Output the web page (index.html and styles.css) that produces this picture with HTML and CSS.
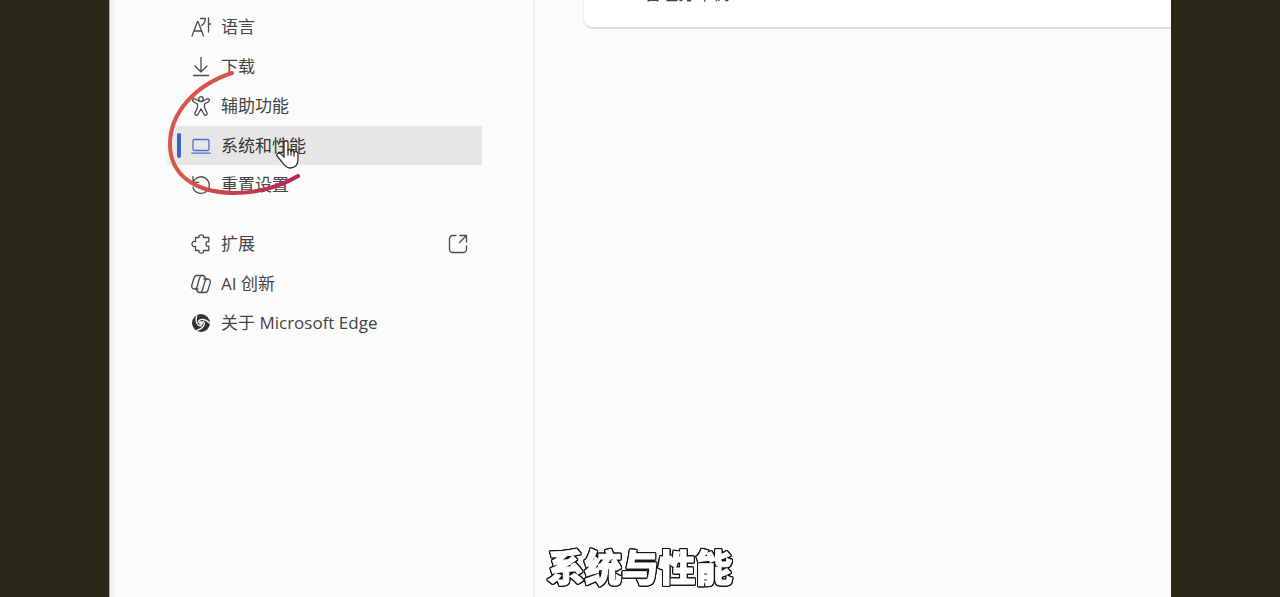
FILE: index.html
```html
<!DOCTYPE html>
<html lang="zh-CN">
<head>
<meta charset="utf-8">
<title>设置</title>
<link rel="stylesheet" href="styles.css">
</head>
<body>
<div class="stage">
  <div class="window">
    <nav class="sidebar" aria-label="设置">
      <ul class="menu">
        <li><a class="item" href="#"><svg class="icon" viewBox="0 0 20 20"><path d="M1 19 6.500 4.500h.5L12.500 19M3 14h7.500"/><path d="M9.500 1.500h4.800c0 3-1.300 5.500-3.800 7M17.500 1v14M17.500 7H20"/></svg>语言</a></li>
        <li><a class="item" href="#"><svg class="icon" viewBox="0 0 20 20"><path d="M10 0v15M4 9l6 6 6-6M2.500 18.500h15"/></svg>下载</a></li>
        <li><a class="item" href="#"><svg class="icon" viewBox="0 0 20 20"><circle cx="10" cy="3" r="2.300"/><path d="M7.700 5 4.300 3C2 2 .5 4.500 2.500 5.700l4 2.300v3.500L4 17c-.6 2.200 2.100 3.200 3 1.200L10 12.700l3 5.500c.9 2 3.600 1 3-1.200l-2.500-5.500V8l4-2.300C19.500 4.500 18 2 15.700 3L12.300 5c-1.400.7-3.200.7-4.600 0Z"/></svg>辅助功能</a></li>
        <li><a class="item selected" href="#" aria-current="page"><svg class="icon" viewBox="0 0 20 20"><rect x="2" y="3.500" width="16" height="11" rx="1.500"/><path d="M.8 17.200h18.400"/></svg>系统和性能</a></li>
        <li><a class="item" href="#"><svg class="icon" viewBox="0 0 20 20"><path d="M2 1.500v5.800h5.800M2.300 7A8.300 8.300 0 1 1 2 12.300"/></svg>重置设置</a></li>
      </ul>
      <ul class="menu">
        <li><a class="item" href="#"><svg class="icon" viewBox="0 0 20 20"><path d="M4.500 3.500H8C7.500 1.500 8.500.8 10.200.8s2.700.7 2.200 2.700h5.400v4.300c-2-.5-2.700.5-2.700 2.200s.7 2.700 2.700 2.200v4.300h-5.400c.5 2-.5 2.700-2.200 2.700S7.500 18.500 8 16.500H4.500v-4c-2 .5-3.500-.5-3.500-2.500s1.500-3 3.500-2.500Z"/></svg>扩展<svg class="icon external" viewBox="0 0 20 20"><path d="M8 1.500H5Q1.500 1.500 1.500 5v10q0 3.500 3.500 3.500h10q3.500 0 3.500-3.500v-3M12 1.500h6.500V8M18.500 1.500l-7 7"/></svg></a></li>
        <li><a class="item" href="#"><svg class="icon" viewBox="0 0 20 20"><path d="M7 15H3.500C.8 15 .3 13 1 10.500l2-6.500C3.600 2 4.500 1.500 6 1.500h6c1.500 0 2 1 2.500 3.500M13 5h3.500c2.700 0 3.200 2 2.500 4.500L17 16c-.6 2-1.500 2.500-3 2.500H8c-1.500 0-2-1-2.500-3.500M10.500 1.500C9 2 8.700 3.500 8.300 5L6 13c-.5 1.500-1 2-2.500 2M9.500 18.500c1.500-.5 1.800-2 2.200-3.500L14 7c.5-1.500 1-2 2.500-2"/></svg>AI 创新</a></li>
        <li><a class="item" href="#"><svg class="icon" viewBox="0 0 20 20"><circle class="solid" cx="10" cy="10" r="9"/><circle class="hole" cx="10" cy="10" r="2"/><g class="cut"><path d="M7.500 9C8 5.500 14 5 18.500 10"/><path d="M7.500 9C8 5.500 14 5 18.500 10" transform="rotate(120 10 10)"/><path d="M7.500 9C8 5.500 14 5 18.500 10" transform="rotate(240 10 10)"/></g></svg>关于 Microsoft Edge</a></li>
      </ul>
    </nav>
    <main class="content">
      <section class="card"><p class="card-text">管理打印机</p></section>
    </main>
  </div>
  <svg class="stroke-mark" viewBox="0 0 140 130" aria-hidden="true">
    <defs><linearGradient id="mark" x1="0" y1="0" x2="1" y2="1"><stop offset="0" stop-color="#d64f50"/><stop offset=".5" stop-color="#d75a4b"/><stop offset="1" stop-color="#b51f52"/></linearGradient></defs>
    <path d="M72 8C35 20 10 48 10 79c0 30 23 48 63 49 27 0 48-7 65-17" stroke="url(#mark)"/>
  </svg>
  <svg class="pointer" viewBox="0 0 24 30" aria-hidden="true"><path d="M8 18V4c0-3 4-3 4 0v8c0-2 3-2 3 0v1c0-2 3-2 3 0v1c0-2 4-2 4 1v5c0 5-2 9-8 9-4 0-6-3-8-6l-5-6c-1-2 2-4 4-2Z"/><path d="M12 11v5M15 12v4M18 13v4"/></svg>
  <p class="caption">系统与性能</p>
</div>
</body>
</html>
```
FILE: styles.css
```css
* { box-sizing: border-box; }
body {
  margin: 0;
  background: #292716;
  color: #444;
  font: 17px/24px "Open Sans", "Noto Sans CJK SC", sans-serif;
}
.stage {
  position: relative;
  min-height: 100vh;
  padding: 0 109px;
  overflow: hidden;
  display: flex;
}
.window {
  flex: 1;
  display: grid;
  grid-template-columns: 425px 1fr;
  background: #fbfbfb;
  border-left: 1px solid #aaa;
  box-shadow: inset 4px 0 #f4f2f1;
}
.sidebar {
  padding: 7px 51px 0 56px;
  border-right: 2px solid #f1f1f1;
  display: flex;
  flex-direction: column;
  gap: 19px;
}
.menu {
  display: grid;
  grid-auto-rows: 40px 39px;
  list-style: none;
  margin: 0;
  padding: 0;
}
.item {
  position: relative;
  display: flex;
  align-items: center;
  gap: 10px;
  height: 100%;
  padding: 0 14px 0 25px;
  color: inherit;
  text-decoration: none;
}
.selected {
  background: linear-gradient(90deg, #f5f5f5, #e6e6e6 12px);
  color: #333;
}
.selected::before {
  content: "";
  position: absolute;
  left: 11px;
  top: 7px;
  width: 4px;
  height: 25px;
  border-radius: 2px;
  background: #3b65c4;
}
.icon {
  flex: none;
  width: 20px;
  height: 20px;
  fill: none;
  stroke: #4a4a4a;
  stroke-width: 1.3;
  stroke-linecap: round;
  stroke-linejoin: round;
}
.selected .icon { stroke: #4c70c8; }
.external { margin-left: auto; }
.icon .solid { fill: #333; stroke: none; }
.icon .hole { fill: #fbfbfb; stroke: none; }
.icon .cut { stroke: #fbfbfb; }
.content { padding-left: 48px; }
.card {
  margin-top: -18px;
  padding: 0 0 21px 60px;
  background: #fff;
  border: solid #ddd;
  border-width: 0 0 2px 1px;
  border-left-color: #eee;
  border-radius: 0 0 0 10px;
}
.card-text { margin: 0; }
.stroke-mark {
  position: absolute;
  left: 160px;
  top: 65px;
  width: 140px;
  height: 130px;
  overflow: visible;
  fill: none;
  stroke-width: 4;
  stroke-linecap: round;
}
.pointer {
  position: absolute;
  left: 276px;
  top: 139px;
  width: 24px;
  height: 30px;
  fill: #fff;
  stroke: #333;
  stroke-width: 1.3;
  stroke-linecap: round;
}
.caption {
  position: absolute;
  left: 0;
  right: 0;
  bottom: 3px;
  margin: 0;
  text-align: center;
  font: 900 37px/56px "Noto Sans CJK SC", sans-serif;
  color: #fff;
  -webkit-text-stroke: 1px #fff;
  filter: drop-shadow(1px 0 #111) drop-shadow(-1px 0 #111) drop-shadow(0 1px #111) drop-shadow(0 -1px #111);
}
```
